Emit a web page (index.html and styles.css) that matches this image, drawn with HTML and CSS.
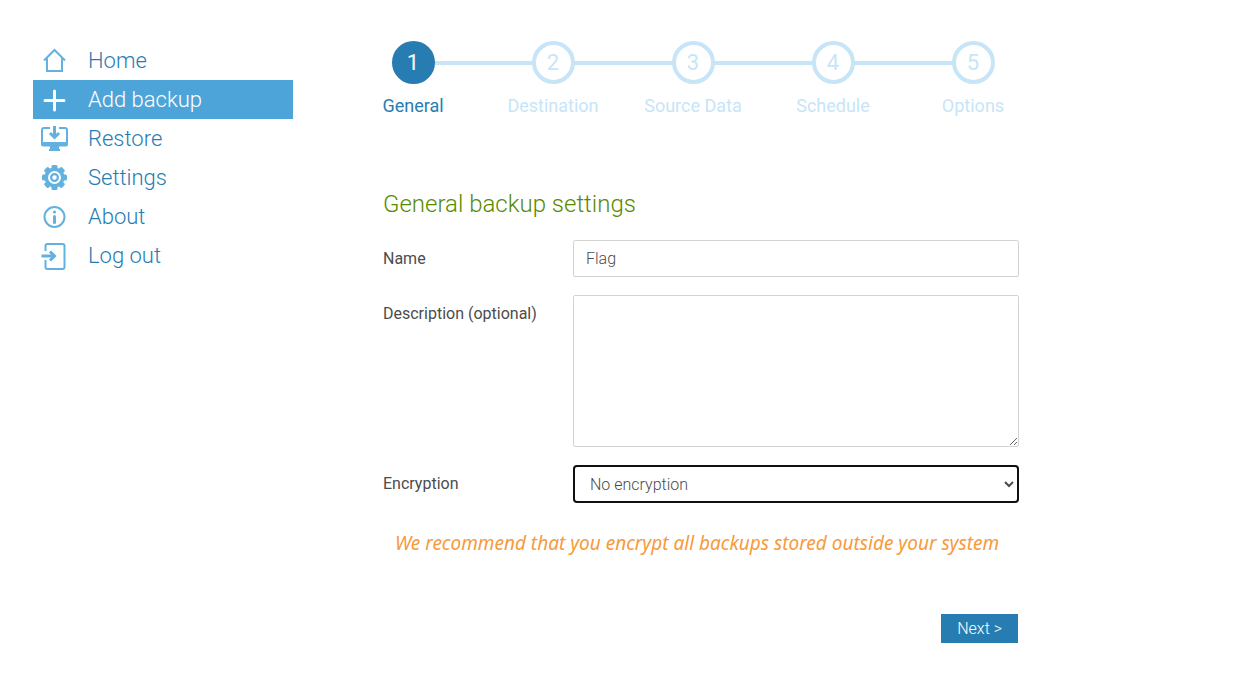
FILE: index.html
```html
<!DOCTYPE html>
<html lang="en">
<head>
<meta charset="utf-8">
<meta name="viewport" content="width=device-width, initial-scale=1">
<title>Add backup</title>
<link rel="stylesheet" href="styles.css">
</head>
<body>
<div class="page">
  <nav class="sidebar" aria-label="Main menu">
    <ul class="menu">
      <li><a class="menu-link" href="#home">
        <svg class="icon" viewBox="-.5 0 28 28" aria-hidden="true"><path d="M3.500 13.500 14 3l10.500 10.500M6.500 11.500V24h15V11.500" fill="none" stroke="currentColor" stroke-width="2"/></svg>
        Home</a></li>
      <li><a class="menu-link active" href="#add" aria-current="page">
        <svg class="icon" viewBox="-.5 0 28 28" aria-hidden="true"><path d="M14 5v19M4.500 14.500h19" fill="none" stroke="currentColor" stroke-width="3" stroke-linecap="round"/></svg>
        Add backup</a></li>
      <li><a class="menu-link" href="#restore">
        <svg class="icon" viewBox="0 0 28 28" aria-hidden="true"><path d="M10 3H4a2 2 0 0 0-2 2v13h25V5a2 2 0 0 0-2-2h-6" fill="none" stroke="currentColor" stroke-width="2"/><path d="M1 17h27v2.500a2 2 0 0 1-2 2h-7v2.500h1v2H9v-2h1v-2.500H3a2 2 0 0 1-2-2z" fill="currentColor"/><path d="M14.500 1v11M10 8l4.500 4.500L19 8" fill="none" stroke="currentColor" stroke-width="3"/></svg>
        Restore</a></li>
      <li><a class="menu-link" href="#settings">
        <svg class="icon" viewBox="-.5 .5 28 28" aria-hidden="true"><g fill="currentColor"><rect x="11" y="1.500" width="6" height="25" rx="1.500"/><rect x="11" y="1.500" width="6" height="25" rx="1.500" transform="rotate(45 14 14)"/><rect x="11" y="1.500" width="6" height="25" rx="1.500" transform="rotate(90 14 14)"/><rect x="11" y="1.500" width="6" height="25" rx="1.500" transform="rotate(135 14 14)"/><circle cx="14" cy="14" r="10"/></g><circle class="gear-ring" cx="14" cy="14" r="5.500"/><circle class="gear-hole" cx="14" cy="14" r="2.200"/></svg>
        Settings</a></li>
      <li><a class="menu-link" href="#about">
        <svg class="icon" viewBox="-.5 0 28 28" aria-hidden="true"><circle cx="14" cy="14" r="10" fill="none" stroke="currentColor" stroke-width="2"/><path d="M14 13.500v6" stroke="currentColor" stroke-width="3" stroke-linecap="round"/><circle cx="14" cy="9" r="1.600" fill="currentColor"/></svg>
        About</a></li>
      <li><a class="menu-link" href="#logout">
        <svg class="icon" viewBox="-.5 0 28 28" aria-hidden="true"><path d="M5 9V4a2 2 0 0 1 2-2h15a2 2 0 0 1 2 2v21a2 2 0 0 1-2 2H7a2 2 0 0 1-2-2v-7" fill="none" stroke="currentColor" stroke-width="2"/><path d="M1 14h12M9.500 9.500 14 14l-4.500 4.500" fill="none" stroke="currentColor" stroke-width="3"/></svg>
        Log out</a></li>
    </ul>
  </nav>
  <main class="content">
    <ol class="steps">
      <li class="step current" aria-current="step"><span class="number">1</span><span>General</span></li>
      <li class="step"><span class="number">2</span><span>Destination</span></li>
      <li class="step"><span class="number">3</span><span>Source Data</span></li>
      <li class="step"><span class="number">4</span><span>Schedule</span></li>
      <li class="step"><span class="number">5</span><span>Options</span></li>
    </ol>
    <form class="form">
      <h1 class="title">General backup settings</h1>
      <div class="row">
        <label class="label" for="name">Name</label>
        <input class="field" id="name" type="text" value="Flag">
      </div>
      <div class="row">
        <label class="label" for="description">Description (optional)</label>
        <textarea class="field area" id="description"></textarea>
      </div>
      <div class="row">
        <label class="label" for="encryption">Encryption</label>
        <select class="field choice" id="encryption"><option>No encryption</option></select>
      </div>
      <p class="warning">We recommend that you encrypt all backups stored outside your system</p>
      <div class="actions"><button class="next" type="button">Next &gt;</button></div>
    </form>
  </main>
</div>
</body>
</html>
```
FILE: styles.css
```css
* { box-sizing: border-box; }
body {
  margin: 0;
  background: #fff;
  color: #4c4c4c;
  font-family: "Clear Sans", Roboto, "Liberation Sans", sans-serif;
  font-size: 16px;
}
.page { display: flex; gap: 50px; padding: 41px 33px 31px; }
.sidebar { flex: 0 0 260px; }
.menu, .steps { list-style: none; margin: 0; padding: 0; }
.menu-link {
  display: flex;
  align-items: center;
  gap: 20px;
  height: 39px;
  padding-left: 7px;
  color: #277db2;
  font-size: 22px;
  font-weight: 300;
  text-decoration: none;
}
.icon { width: 28px; height: 28px; color: #63b1df; }
.gear-ring { fill: currentColor; stroke: #fff; stroke-width: 2; }
.gear-hole { fill: #fff; }
.menu-link.active { background: #4da4d8; color: #fff; }
.menu-link.active .icon { color: #fff; }

.content { flex: 1; max-width: 700px; }
.steps { display: grid; grid-template-columns: repeat(5, 1fr); }
.step {
  position: relative;
  display: flex;
  flex-direction: column;
  align-items: center;
  gap: 10px;
  color: #c7e5f7;
  font-size: 18px;
  line-height: 24px;
}
.step + .step::before {
  content: "";
  position: absolute;
  top: 20px;
  left: -50%;
  width: 100%;
  height: 4px;
  background: #c7e5f7;
}
.number {
  position: relative;
  z-index: 1;
  display: flex;
  align-items: center;
  justify-content: center;
  width: 43px;
  height: 43px;
  border: 4px solid #c7e5f7;
  border-radius: 50%;
  background: #fff;
  font-size: 22px;
}
.step.current { color: #277db2; }
.current .number { z-index: 2; border-color: #277db2; background: #277db2; color: #fff; }

.form { margin: 70px 24px 0 40px; }
.title { margin: 0 0 20px; color: #5a8a00; font-size: 24px; font-weight: 300; line-height: 32px; }
.row { display: flex; margin-bottom: 18px; }
.label { flex: 0 0 190px; padding-top: 9px; line-height: 20px; }
.field {
  flex: 1;
  min-width: 0;
  height: 37px;
  margin: 0;
  padding: 8px 12px;
  border: 1px solid #d3d3d3;
  border-radius: 2px;
  background: #fff;
  color: #4c4c4c;
  font: 300 16px "Clear Sans", Roboto, "Liberation Sans", sans-serif;
}
.area { height: 152px; resize: both; }
.choice { height: 38px; border: 2px solid #101010; border-radius: 4px; padding: 0 0 0 11px; outline: none; }
.warning {
  margin: 28px 0 0;
  padding-right: 8px;
  color: #f79a3b;
  font-family: "Clear Sans", "Noto Sans", sans-serif;
  font-size: 19px;
  font-style: italic;
  line-height: 24px;
  text-align: center;
}
.actions { display: flex; justify-content: flex-end; margin-top: 59px; padding-right: 1px; }
.next {
  height: 29px;
  padding: 0 16px;
  border: 0;
  background: #277db2;
  color: #fff;
  font: 300 16px "Clear Sans", Roboto, "Liberation Sans", sans-serif;
}
```
